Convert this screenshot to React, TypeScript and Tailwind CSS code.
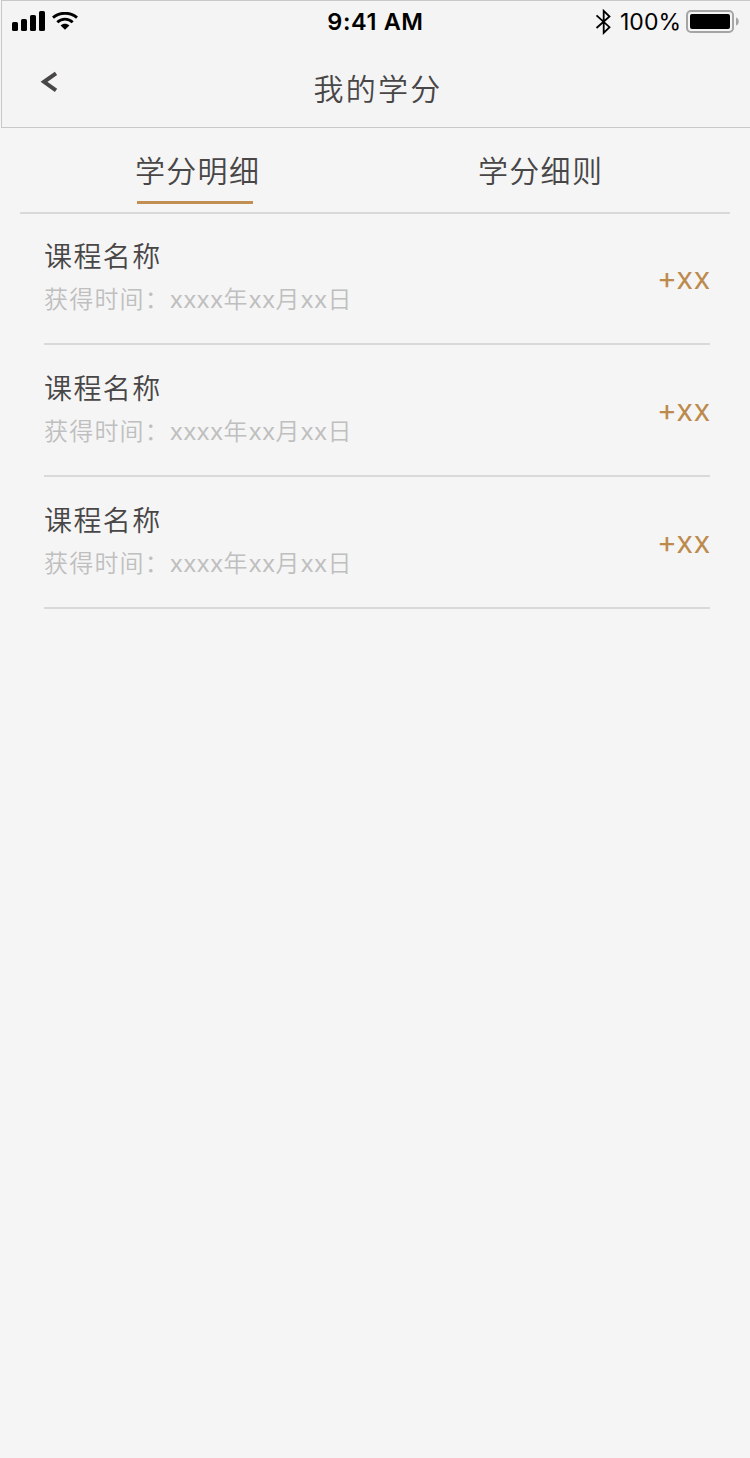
const records = [1, 2, 3].map((id) => ({
  id,
  name: '课程名称',
  year: 'xxxx',
  month: 'xx',
  day: 'xx',
  score: 'xx',
}));

function SignalIcon() {
  return (
    <svg width="34" height="20" viewBox="0 0 34 20" fill="#000">
      <rect x="0" y="11" width="6" height="9" rx="1.6" />
      <rect x="9" y="8" width="6" height="12" rx="1.6" />
      <rect x="18" y="4" width="6" height="16" rx="1.6" />
      <rect x="27" y="0" width="6" height="20" rx="1.6" />
    </svg>
  );
}

function WifiIcon() {
  return (
    <svg width="26" height="18" viewBox="0 0 26 18" fill="none" stroke="#000" strokeWidth="2.8">
      <path d="M1 5.600C7.600 -0.200 18.400 -0.200 25 5.600" />
      <path d="M5.300 10.200C9.700 6 16.300 6 20.700 10.200" />
      <path d="M8.600 13.500C11 11 15 11 17.400 13.500L13 17.800Z" fill="#000" stroke="none" />
    </svg>
  );
}

function BluetoothIcon() {
  return (
    <svg width="16" height="28" viewBox="0 0 16 28" fill="none" stroke="#000" strokeWidth="1.8">
      <path d="M1.500 7.300L14.500 19.200L8.700 24.800V2.800L14.500 8.500L1.500 20" />
    </svg>
  );
}

function BatteryIcon() {
  return (
    <svg width="54" height="24" viewBox="0 0 54 24">
      <rect x="1" y="1" width="46" height="21" rx="4" fill="none" stroke="#a5a5a5" strokeWidth="2" />
      <rect x="4" y="4" width="40" height="15" rx="2" fill="#000" />
      <path d="M50 7.500C53.700 8.500 53.700 14.500 50 15.500Z" fill="#a5a5a5" />
    </svg>
  );
}

function Digits({ value }: { value: string }) {
  return <span className="font-['Noto_Sans',sans-serif] font-normal tracking-[0.700px]">{value}</span>;
}

export default function App() {
  return (
    <div className="h-[1458px] w-[750px] overflow-hidden bg-[#f5f5f5] font-['Noto_Sans_CJK_SC',sans-serif] font-[350] text-[#484646]">
      <header className="ml-px h-32 border-b border-l border-t border-[#c8c8c8] bg-[#f4f4f4]">
        <div className="grid h-[42px] grid-cols-3 items-center font-['Inter',sans-serif] font-normal text-black">
          <div className="-mt-0.5 flex items-center gap-[6px] pl-[10px]">
            <SignalIcon />
            <WifiIcon />
          </div>
          <div className="whitespace-nowrap pr-px text-center text-[23.500px] font-semibold tracking-[0.600px]">9:41 AM</div>
          <div className="flex items-center justify-end pr-[10px]">
            <BluetoothIcon />
            <span className="ml-[9px] mr-[5px] text-[23px]">100%</span>
            <BatteryIcon />
          </div>
        </div>
        <div className="grid h-[84px] grid-cols-[1fr_auto_1fr] items-start">
          <button aria-label="返回" className="ml-[37px] mt-[28px] w-5">
            <svg width="20" height="22" viewBox="0 0 20 22" fill="none" stroke="#484646" strokeWidth="4">
              <path d="M17 2.300L5 10.800L17 19.300" />
            </svg>
          </button>
          <h1 className="mt-[21px] pl-1 text-[30px] leading-[46px] tracking-[2.3px]">我的学分</h1>
        </div>
      </header>

      <nav className="mx-5 grid h-[86px] grid-cols-2 border-b-2 border-[#d9d9d9] text-[30px] tracking-[1.3px]">
        <button className="flex flex-col items-start pl-[115px]">
          <span className="mt-[18px] h-[46px] leading-[46px]">学分明细</span>
          <span className="ml-[2px] mt-[9px] h-[3px] w-[116px] bg-[#c18f52]" />
        </button>
        <button className="flex flex-col items-start pl-[103px]">
          <span className="mt-[18px] h-[46px] leading-[46px]">学分细则</span>
        </button>
      </nav>

      <ul className="-mt-px ml-11 mr-10">
        {records.map((record) => (
          <li key={record.id} className="flex h-[132px] justify-between border-b-2 border-[#d9d9d9]">
            <div className="pt-[21px]">
              <p className="text-[28px] leading-[42px] tracking-[1.4px]">{record.name}</p>
              <p className="mt-1 text-[24px] leading-9 tracking-[1.2px] text-[#bfbfbf]">
                获得时间：<Digits value={record.year} />年<Digits value={record.month} />月<Digits value={record.day} />日
              </p>
            </div>
            <p className="mr-[-1px] pt-[43px] font-['Noto_Sans',sans-serif] text-[30px] font-normal leading-[44px] tracking-[1.2px] text-[#bd8a4d]">
              <span className="font-['Inter',sans-serif] tracking-normal">+</span>
              {record.score}
            </p>
          </li>
        ))}
      </ul>
    </div>
  );
}
